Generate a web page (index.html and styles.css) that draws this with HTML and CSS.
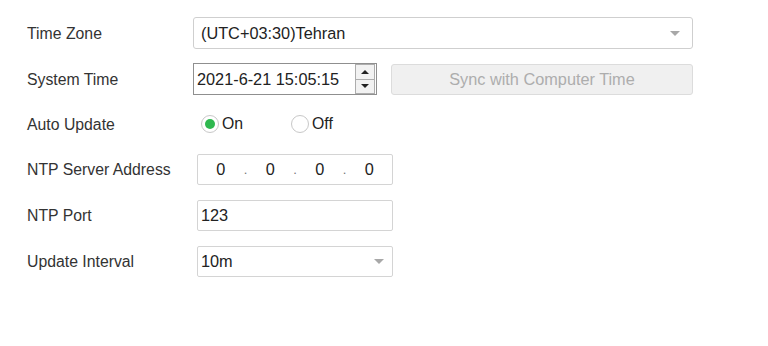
FILE: index.html
```html
<!DOCTYPE html>
<html lang="en">
<head>
  <meta charset="UTF-8" />
  <meta name="viewport" content="width=device-width, initial-scale=1.0"/>
  <title>Time Settings</title>
  <link rel="stylesheet" href="styles.css">
</head>
<body>
  <form class="settings">
    <!-- Time Zone -->
    <div class="row">
      <label class="row-label">Time Zone</label>
      <div class="select select-wide">
        <span>(UTC+03:30)Tehran</span>
        <span class="caret"></span>
      </div>
    </div>

    <!-- System Time -->
    <div class="row">
      <label class="row-label">System Time</label>
      <div class="datetime">
        <span class="datetime-value">2021-6-21 15:05:15</span>
        <div class="spinner">
          <span class="spin up"></span>
          <span class="spin down"></span>
        </div>
      </div>
      <button type="button" class="sync-btn" disabled>Sync with Computer Time</button>
    </div>

    <!-- Auto Update -->
    <div class="row row-radio">
      <label class="row-label">Auto Update</label>
      <div class="radios">
        <span class="radio checked"></span><span class="radio-text">On</span>
        <span class="radio"></span><span class="radio-text">Off</span>
      </div>
    </div>

    <!-- NTP -->
    <div class="row">
      <label class="row-label">NTP Server Address</label>
      <div class="field ip">
        <span class="octet">0</span><span class="dot">.</span>
        <span class="octet">0</span><span class="dot">.</span>
        <span class="octet">0</span><span class="dot">.</span>
        <span class="octet">0</span>
      </div>
    </div>

    <div class="row">
      <label class="row-label">NTP Port</label>
      <div class="field">123</div>
    </div>

    <div class="row">
      <label class="row-label">Update Interval</label>
      <div class="field select">
        <span>10m</span>
        <span class="caret"></span>
      </div>
    </div>
  </form>
</body>
</html>
```

FILE: styles.css
```css
/* ================================
   Geral
   ================================ */
* {
  margin: 0;
  padding: 0;
  box-sizing: border-box;
}
body {
  font-family: "Liberation Sans", Arial, sans-serif;
  font-size: 16.3px;
  color: #222;
  background-color: #fff;
}

.settings {
  display: flex;
  flex-direction: column;
  gap: 14px;
  padding: 17px 0 0 27px;
}

.row {
  display: flex;
  align-items: center;
  height: 32px;
}
.row-radio {
  height: 30px;
}
.row-label {
  width: 166px;
  flex-shrink: 0;
  color: #333;
  font-size: 15.8px;
  padding-top: 1px;
}

/* ================================
   Selects e campos
   ================================ */
.select {
  display: flex;
  align-items: center;
  justify-content: space-between;
}
.select-wide {
  width: 500px;
  height: 32px;
  border: 1px solid #cfcfcf;
  border-radius: 3px;
  padding: 0 12px 0 7px;
}
.caret {
  width: 0;
  height: 0;
  border-left: 5px solid transparent;
  border-right: 5px solid transparent;
  border-top: 5px solid #a8a8a8;
}

.field {
  margin-left: 4px;
  width: 196px;
  height: 31px;
  border: 1px solid #d4d4d4;
  border-radius: 2px;
  padding: 0 4px 0 3px;
  display: flex;
  align-items: center;
}
.field.select {
  justify-content: space-between;
  padding-right: 8px;
}

.ip {
  padding: 0;
}
.octet {
  flex: 1;
  text-align: center;
}
.dot {
  width: 4px;
  text-align: center;
  color: #777;
  font-size: 13px;
}

/* ================================
   Data / hora
   ================================ */
.datetime {
  width: 184px;
  height: 32px;
  border: 1px solid #8f8f8f;
  display: flex;
  align-items: center;
  justify-content: space-between;
  padding: 0 0 0 3px;
  font-size: 16.3px;
}
.spinner {
  width: 20px;
  height: 30px;
  margin-right: 1px;
  display: flex;
  flex-direction: column;
  border: 1px solid #adadad;
  background: #f2f2f2;
}
.spin {
  flex: 1;
  display: flex;
  align-items: center;
  justify-content: center;
}
.spin.up {
  border-bottom: 1px solid #adadad;
}
.spin::after {
  content: "";
  width: 0;
  height: 0;
  border-left: 4px solid transparent;
  border-right: 4px solid transparent;
}
.spin.up::after {
  border-bottom: 4px solid #222;
}
.spin.down::after {
  border-top: 4px solid #222;
}

.sync-btn {
  margin-left: 14px;
  width: 302px;
  height: 31px;
  background-color: #f0f0f0;
  border: 1px solid #dcdcdc;
  border-radius: 3px;
  color: #adadad;
  font-family: inherit;
  font-size: 16.3px;
}

/* ================================
   Radios
   ================================ */
.radios {
  display: flex;
  align-items: center;
  margin-left: 8px;
}
.radio {
  width: 18px;
  height: 18px;
  border: 1px solid #c8c8c8;
  border-radius: 50%;
  display: flex;
  align-items: center;
  justify-content: center;
}
.radio.checked::after {
  content: "";
  width: 10px;
  height: 10px;
  border-radius: 50%;
  background-color: #2fb84f;
}
.radio-text {
  margin-left: 3px;
  width: 69px;
  font-size: 15.8px;
}
```
